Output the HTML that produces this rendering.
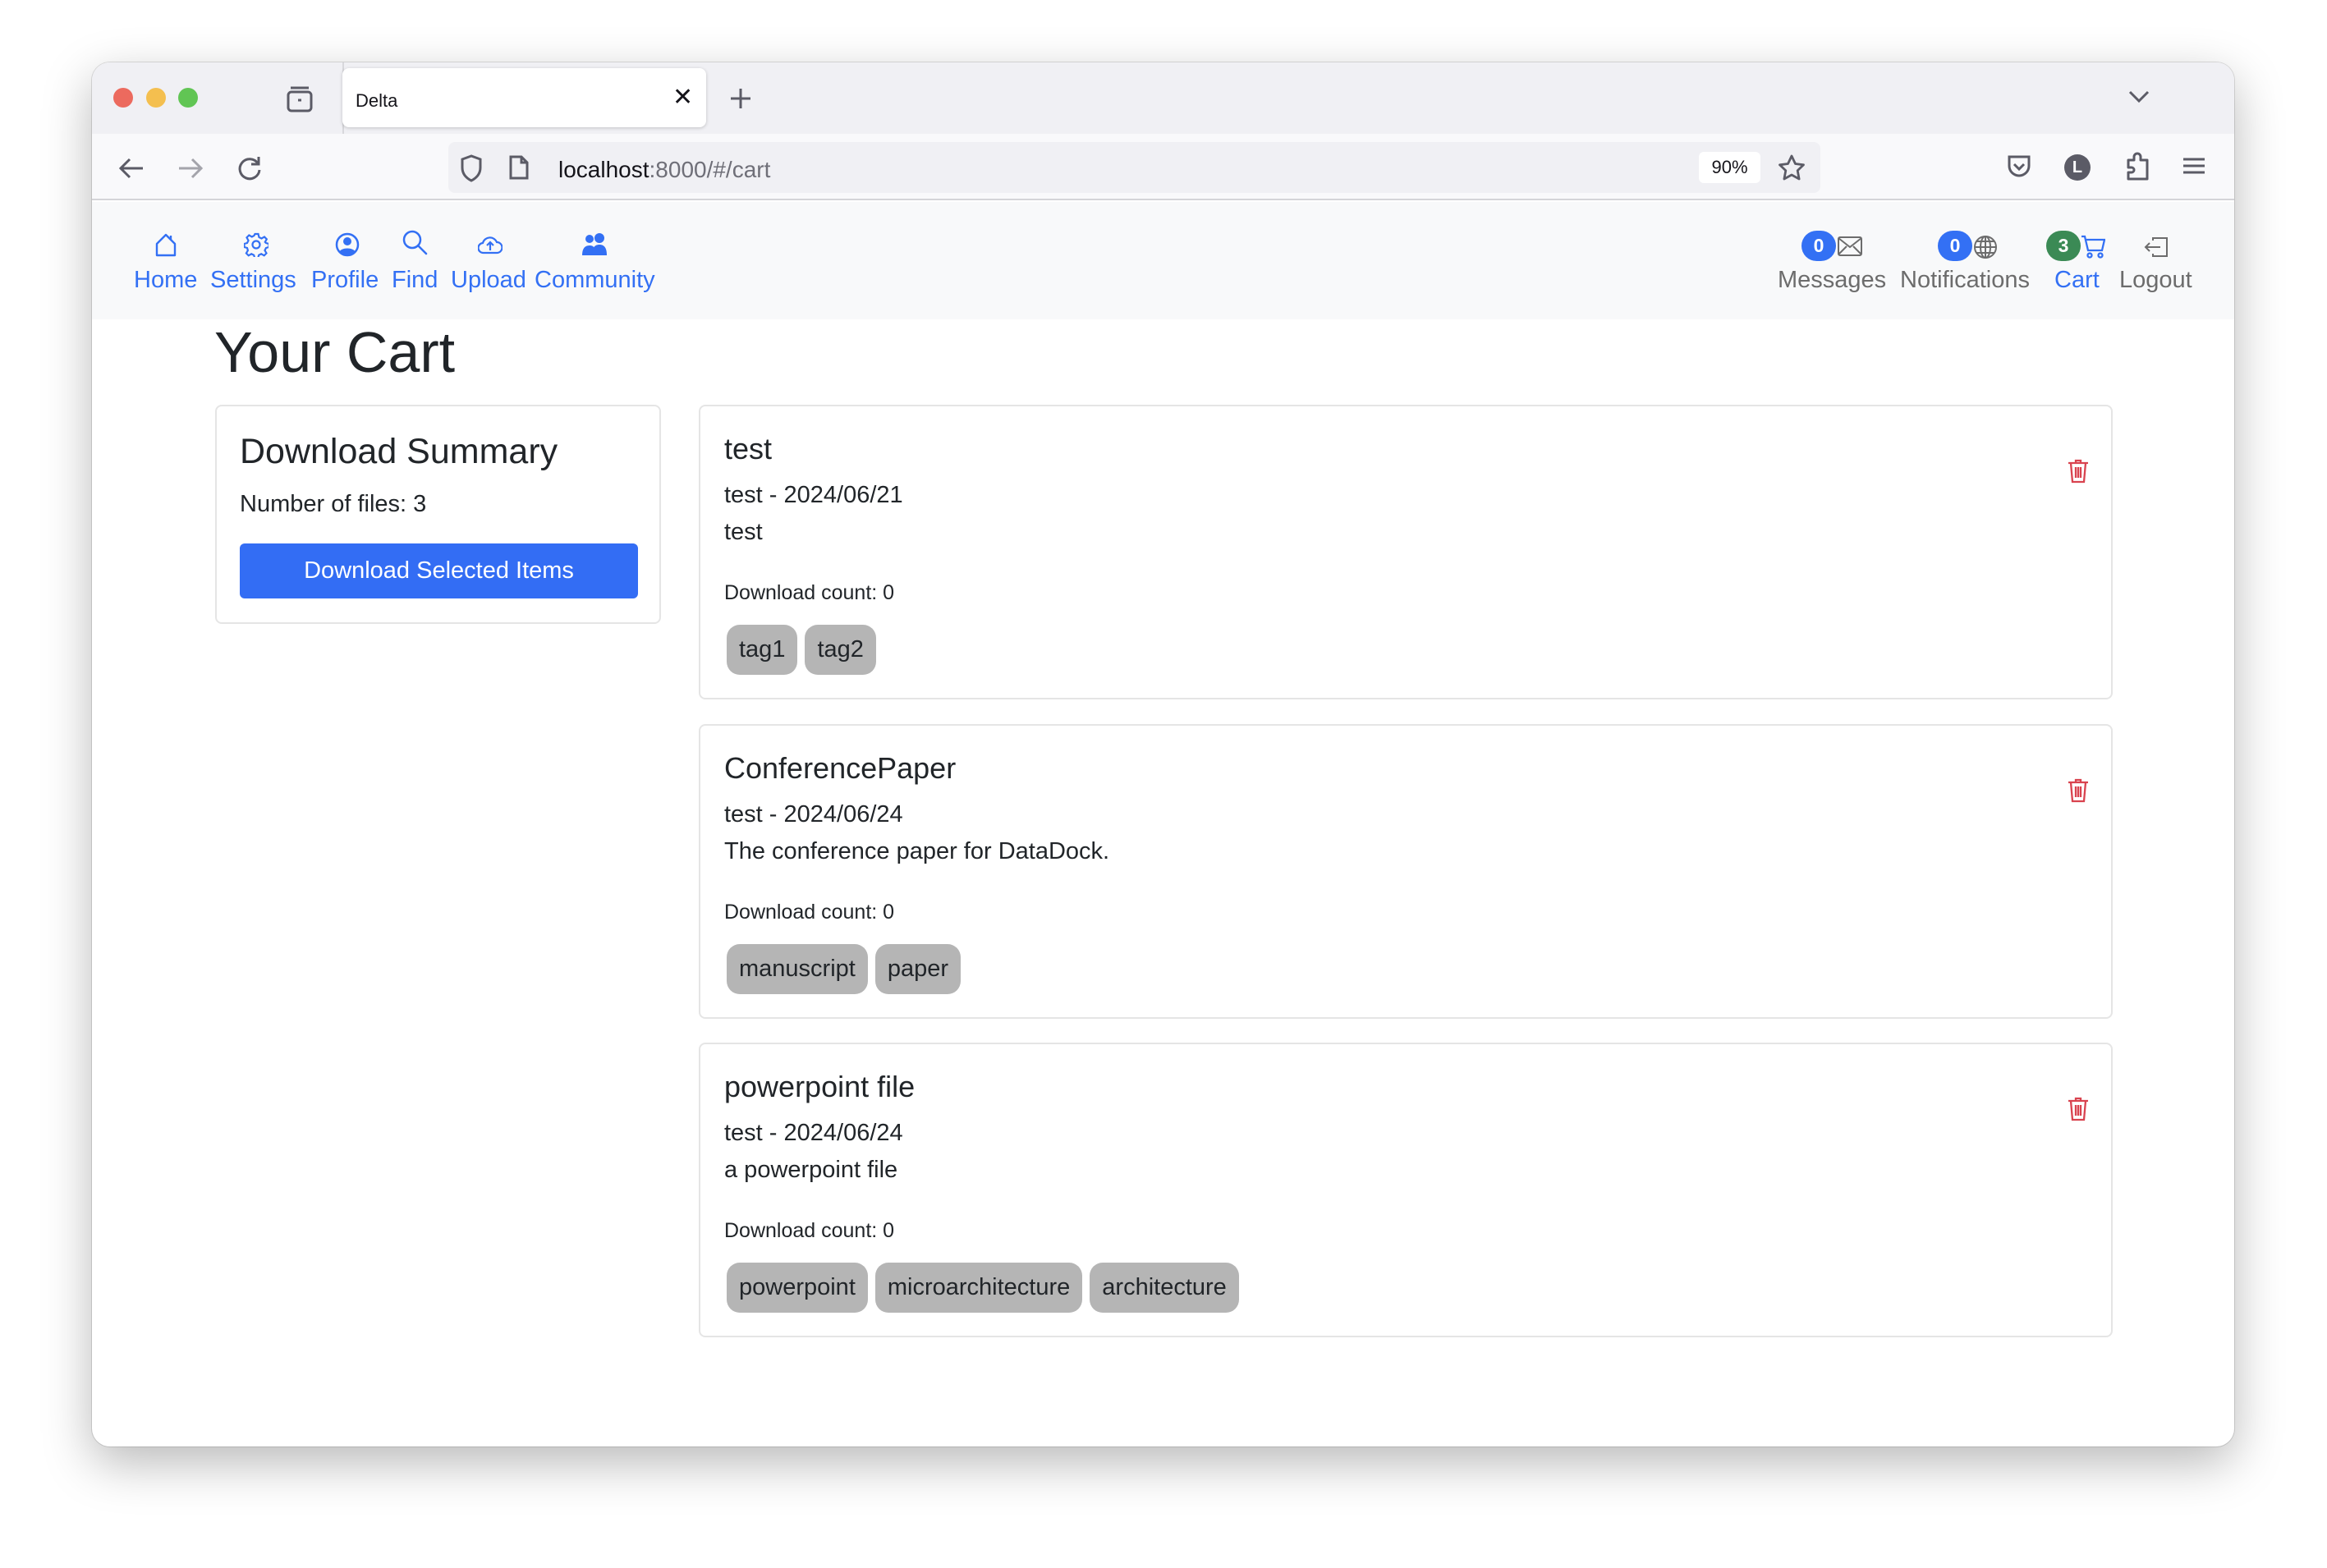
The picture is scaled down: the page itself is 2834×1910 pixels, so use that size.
<!DOCTYPE html>
<html><head><meta charset="utf-8"><style>
*{box-sizing:border-box;margin:0;padding:0}
body{width:2834px;height:1910px;background:#fff;font-family:"Liberation Sans",Arial,sans-serif;position:relative;overflow:hidden;color:#212529}
.abs{position:absolute}
.win{left:112px;top:76px;width:2609px;height:1686px;border-radius:22px;overflow:hidden;background:#fff;box-shadow:0 20px 60px rgba(0,0,0,.28),0 0 0 1px rgba(0,0,0,.12)}
.tabbar{left:0;top:0;width:2609px;height:87px;background:#f0f0f4}
.toolbar{left:0;top:87px;width:2609px;height:81px;background:#f9f9fb;border-bottom:2px solid #d4d4d8}
.nav{left:0;top:170px;width:2609px;height:143px;background:#f8f9fa}
.lnk{font-size:29px;white-space:nowrap;line-height:1}
.blue{color:#3370f4}.gray{color:#6c6c6c}
.card{border:2px solid #e5e5e5;border-radius:8px;background:#fff}
.t{font-size:29px;white-space:nowrap;line-height:1}
.tag{display:inline-block;background:#b5b5b5;border-radius:16px;height:61px;line-height:61px;padding:0 15px;font-size:29px;color:#212529;margin-right:9px}
.badge{height:37px;border-radius:19px;color:#fff;font-weight:bold;font-size:23px;text-align:center;line-height:37px;width:42px}
</style></head><body>
<div class="abs win">
 <div class="abs tabbar">
  <div class="abs" style="left:26px;top:31px;width:24px;height:24px;border-radius:50%;background:#ec6a5e"></div>
  <div class="abs" style="left:66px;top:31px;width:24px;height:24px;border-radius:50%;background:#f4bf4f"></div>
  <div class="abs" style="left:105px;top:31px;width:24px;height:24px;border-radius:50%;background:#61c554"></div>
  <svg class="abs" style="left:236px;top:28px" width="34" height="34" viewBox="0 0 34 34" fill="none" stroke="#5b5b66" stroke-width="3"><rect x="3" y="8" width="28" height="23" rx="4"/><path d="M6 3h22"/><path d="M15 18h4"/></svg>
  <div class="abs" style="left:305px;top:0;width:2px;height:87px;background:#d8d8dc"></div>
  <div class="abs" style="left:305px;top:7px;width:443px;height:72px;background:#fff;border-radius:8px;box-shadow:0 1px 4px rgba(0,0,0,.2)">
   <div class="abs" style="left:16px;top:27px;font-size:22px;color:#15141a">Delta</div>
   <div class="abs" style="left:402px;top:18px;font-size:30px;color:#15141a">✕</div>
  </div>
  <svg class="abs" style="left:776px;top:30px" width="28" height="28" stroke="#5b5b66" stroke-width="3"><path d="M14 2v24M2 14h24"/></svg>
  <svg class="abs" style="left:2480px;top:34px" width="26" height="16" fill="none" stroke="#5b5b66" stroke-width="3"><path d="M2 2l11 11 11-11"/></svg>
 </div>
 <div class="abs toolbar">
  <svg class="abs" style="left:32px;top:28px" width="32" height="28" fill="none" stroke="#5b5b66" stroke-width="3"><path d="M30 14H4M14 3L3 14l11 11"/></svg>
  <svg class="abs" style="left:104px;top:28px" width="32" height="28" fill="none" stroke="#a4a4ab" stroke-width="3"><path d="M2 14h26M18 3l11 11-11 11"/></svg>
  <svg class="abs" style="left:176px;top:26px" width="32" height="32" fill="none" stroke="#5b5b66" stroke-width="3"><path d="M26 10A12 12 0 1 0 28 18"/><path d="M27 2v9h-9"/></svg>
  <div class="abs" style="left:434px;top:10px;width:1671px;height:62px;background:#f0f0f4;border-radius:8px">
   <svg class="abs" style="left:14px;top:15px" width="28" height="34" fill="none" stroke="#5b5b66" stroke-width="3"><path d="M14 2L3 6v10c0 8 5 13 11 16 6-3 11-8 11-16V6z"/></svg>
   <svg class="abs" style="left:74px;top:16px" width="24" height="30" fill="none" stroke="#5b5b66" stroke-width="3"><path d="M2 2h13l7 7v19H2z"/><path d="M15 2v7h7"/></svg>
   <div class="abs" style="left:134px;top:18px;font-size:28px;color:#15141a">localhost<span style="color:#6f6f78">:8000/#/cart</span></div>
   <div class="abs" style="left:1523px;top:12px;width:75px;height:38px;background:#fff;border-radius:6px;font-size:22px;text-align:center;line-height:38px;color:#15141a">90%</div>
   <svg class="abs" style="left:1619px;top:15px" width="34" height="32" fill="none" stroke="#5b5b66" stroke-width="2.8" stroke-linejoin="round"><path d="M17 2l4.5 9.5 10 1.3-7.3 7 1.9 10.2L17 25l-9.1 5 1.9-10.2-7.3-7 10-1.3z"/></svg>
  </div>
  <svg class="abs" style="left:2332px;top:25px" width="30" height="30" fill="none" stroke="#5b5b66" stroke-width="3"><path d="M3 3h24v11a12 12 0 0 1-24 0z"/><path d="M9 12l6 6 6-6"/></svg>
  <div class="abs" style="left:2402px;top:25px;width:32px;height:32px;border-radius:50%;background:#5b5b66;color:#fff;font-weight:bold;font-size:20px;text-align:center;line-height:32px">L</div>
  <svg class="abs" style="left:2476px;top:22px" width="32" height="36" fill="none" stroke="#5b5b66" stroke-width="3" stroke-linejoin="round"><path d="M4 10h7V6a4 4 0 0 1 8 0v4h8v23H4v-8h4a3 3 0 0 0 0-6H4z"/></svg>
  <svg class="abs" style="left:2547px;top:28px" width="26" height="22" stroke="#5b5b66" stroke-width="3"><path d="M0 3h26M0 11h26M0 19h26"/></svg>
 </div>
 <div class="abs nav">
  <svg class="abs" style="left:76px;top:37px" width="28" height="30" fill="none" stroke="#3370f4" stroke-width="2.4" stroke-linejoin="round"><path d="M3 14L14 3l11 11v14H3z"/><path d="M20 4v5"/></svg>
  <svg class="abs" style="left:185px;top:37px" width="30" height="30" fill="none" stroke="#3370f4" stroke-width="2.2"><circle cx="15" cy="15" r="4.5"/><path d="M13 2h4l1 4 3 1.5 3.5-2 2.8 2.8-2 3.5L26.5 13l3.5 1v4l-3.5 1-1.5 3 2 3.5-2.8 2.8-3.5-2-3 1.5-1 3.5h-4l-1-3.5-3-1.5-3.5 2-2.8-2.8 2-3.5L3.5 19 0 18v-4l3.5-1L5 10 3 6.3 5.8 3.5l3.5 2L12 4z" transform="translate(0.5 0)"/></svg>
  <svg class="abs" style="left:296px;top:37px" width="30" height="30"><circle cx="15" cy="15" r="13" fill="none" stroke="#3370f4" stroke-width="2.5"/><circle cx="15" cy="11" r="5" fill="#3370f4"/><path d="M5 24c3-6 17-6 20 0a13 13 0 0 1-20 0z" fill="#3370f4"/></svg>
  <svg class="abs" style="left:378px;top:34px" width="32" height="32" fill="none" stroke="#3370f4" stroke-width="2.5"><circle cx="12" cy="12" r="10"/><path d="M19 19l10 10" stroke-linecap="round"/></svg>
  <svg class="abs" style="left:470px;top:39px" width="30" height="26" fill="none" stroke="#3370f4" stroke-width="2.2"><path d="M8 23H7a6 6 0 0 1-1-12 9 9 0 0 1 17-1 6.5 6.5 0 0 1 0 13z"/><path d="M15 20V11M11 14l4-4 4 4"/></svg>
  <svg class="abs" style="left:597px;top:38px" width="30" height="28" fill="#3370f4"><circle cx="9" cy="7" r="5"/><circle cx="21" cy="6" r="6"/><path d="M0 27c0-8 3-12 9-12s7 4 7 12z"/><path d="M12 27c0-9 3-13 9-13s9 4 9 13z"/></svg>
  <div class="abs lnk blue" style="left:51px;top:81px">Home</div>
  <div class="abs lnk blue" style="left:144px;top:81px">Settings</div>
  <div class="abs lnk blue" style="left:267px;top:81px">Profile</div>
  <div class="abs lnk blue" style="left:365px;top:81px">Find</div>
  <div class="abs lnk blue" style="left:437px;top:81px">Upload</div>
  <div class="abs lnk blue" style="left:539px;top:81px">Community</div>
  <div class="abs badge" style="left:2082px;top:35px;background:#3370f4">0</div>
  <svg class="abs" style="left:2126px;top:42px" width="30" height="24" fill="none" stroke="#6c6c6c" stroke-width="2"><rect x="1" y="1" width="28" height="22" rx="2"/><path d="M1 2l14 11 14-11M1 22l10-10M29 22L19 12"/></svg>
  <div class="abs badge" style="left:2248px;top:35px;background:#3370f4">0</div>
  <svg class="abs" style="left:2291px;top:40px" width="30" height="30" fill="none" stroke="#6c6c6c" stroke-width="2"><circle cx="15" cy="15" r="13"/><ellipse cx="15" cy="15" rx="6" ry="13"/><path d="M15 2v26M2 15h26M4 8h22M4 22h22"/></svg>
  <div class="abs badge" style="left:2380px;top:35px;background:#3b8a55">3</div>
  <svg class="abs" style="left:2422px;top:40px" width="30" height="30" fill="none" stroke="#3370f4" stroke-width="2.3"><path d="M1 2h4l4 17h17l3-13H7"/><circle cx="11" cy="25" r="2.5"/><circle cx="24" cy="25" r="2.5"/></svg>
  <svg class="abs" style="left:2499px;top:42px" width="30" height="26" fill="none" stroke="#6c6c6c" stroke-width="2"><path d="M11 5V2h17v22H11v-3"/><path d="M20 13H2M7 8l-5 5 5 5"/></svg>
  <div class="abs lnk gray" style="left:2053px;top:81px">Messages</div>
  <div class="abs lnk gray" style="left:2202px;top:81px">Notifications</div>
  <div class="abs lnk blue" style="left:2390px;top:81px">Cart</div>
  <div class="abs lnk gray" style="left:2469px;top:81px">Logout</div>
 </div>
 <div class="abs" style="left:149px;top:318px;font-size:70px;line-height:1;color:#212529">Your Cart</div>
 <div class="abs card" style="left:150px;top:417px;width:543px;height:267px">
  <div class="abs" style="left:28px;top:34px;font-size:43px;line-height:1;white-space:nowrap">Download Summary</div>
  <div class="abs t" style="left:28px;top:105px">Number of files: 3</div>
  <div class="abs" style="left:28px;top:167px;width:485px;height:67px;background:#336df4;border-radius:6px;color:#fff;font-size:29px;text-align:center;line-height:67px">Download Selected Items</div>
 </div>
 <div class="abs card" style="left:739px;top:417px;width:1722px;height:359px">
  <div class="abs" style="left:29px;top:34px;font-size:36px;line-height:1">test</div>
  <div class="abs t" style="left:29px;top:94px">test - 2024/06/21</div>
  <div class="abs t" style="left:29px;top:139px">test</div>
  <div class="abs" style="left:29px;top:215px;font-size:25px;line-height:1">Download count: 0</div>
  <div class="abs" style="left:32px;top:266px;white-space:nowrap"><span class="tag">tag1</span><span class="tag">tag2</span></div>
  <svg class="abs" style="left:1665px;top:64px" width="26" height="30" fill="none" stroke="#d9434f" stroke-width="2.3"><path d="M1 5h24M10 5V2h6v3M4 5l2 23h14l2-23M10 10v13M13 10v13M16 10v13"/></svg>
 </div>
 <div class="abs card" style="left:739px;top:806px;width:1722px;height:359px">
  <div class="abs" style="left:29px;top:34px;font-size:36px;line-height:1">ConferencePaper</div>
  <div class="abs t" style="left:29px;top:94px">test - 2024/06/24</div>
  <div class="abs t" style="left:29px;top:139px">The conference paper for DataDock.</div>
  <div class="abs" style="left:29px;top:215px;font-size:25px;line-height:1">Download count: 0</div>
  <div class="abs" style="left:32px;top:266px;white-space:nowrap"><span class="tag">manuscript</span><span class="tag">paper</span></div>
  <svg class="abs" style="left:1665px;top:64px" width="26" height="30" fill="none" stroke="#d9434f" stroke-width="2.3"><path d="M1 5h24M10 5V2h6v3M4 5l2 23h14l2-23M10 10v13M13 10v13M16 10v13"/></svg>
 </div>
 <div class="abs card" style="left:739px;top:1194px;width:1722px;height:359px">
  <div class="abs" style="left:29px;top:34px;font-size:36px;line-height:1">powerpoint file</div>
  <div class="abs t" style="left:29px;top:94px">test - 2024/06/24</div>
  <div class="abs t" style="left:29px;top:139px">a powerpoint file</div>
  <div class="abs" style="left:29px;top:215px;font-size:25px;line-height:1">Download count: 0</div>
  <div class="abs" style="left:32px;top:266px;white-space:nowrap"><span class="tag">powerpoint</span><span class="tag">microarchitecture</span><span class="tag">architecture</span></div>
  <svg class="abs" style="left:1665px;top:64px" width="26" height="30" fill="none" stroke="#d9434f" stroke-width="2.3"><path d="M1 5h24M10 5V2h6v3M4 5l2 23h14l2-23M10 10v13M13 10v13M16 10v13"/></svg>
 </div>
</div>
</body></html>
